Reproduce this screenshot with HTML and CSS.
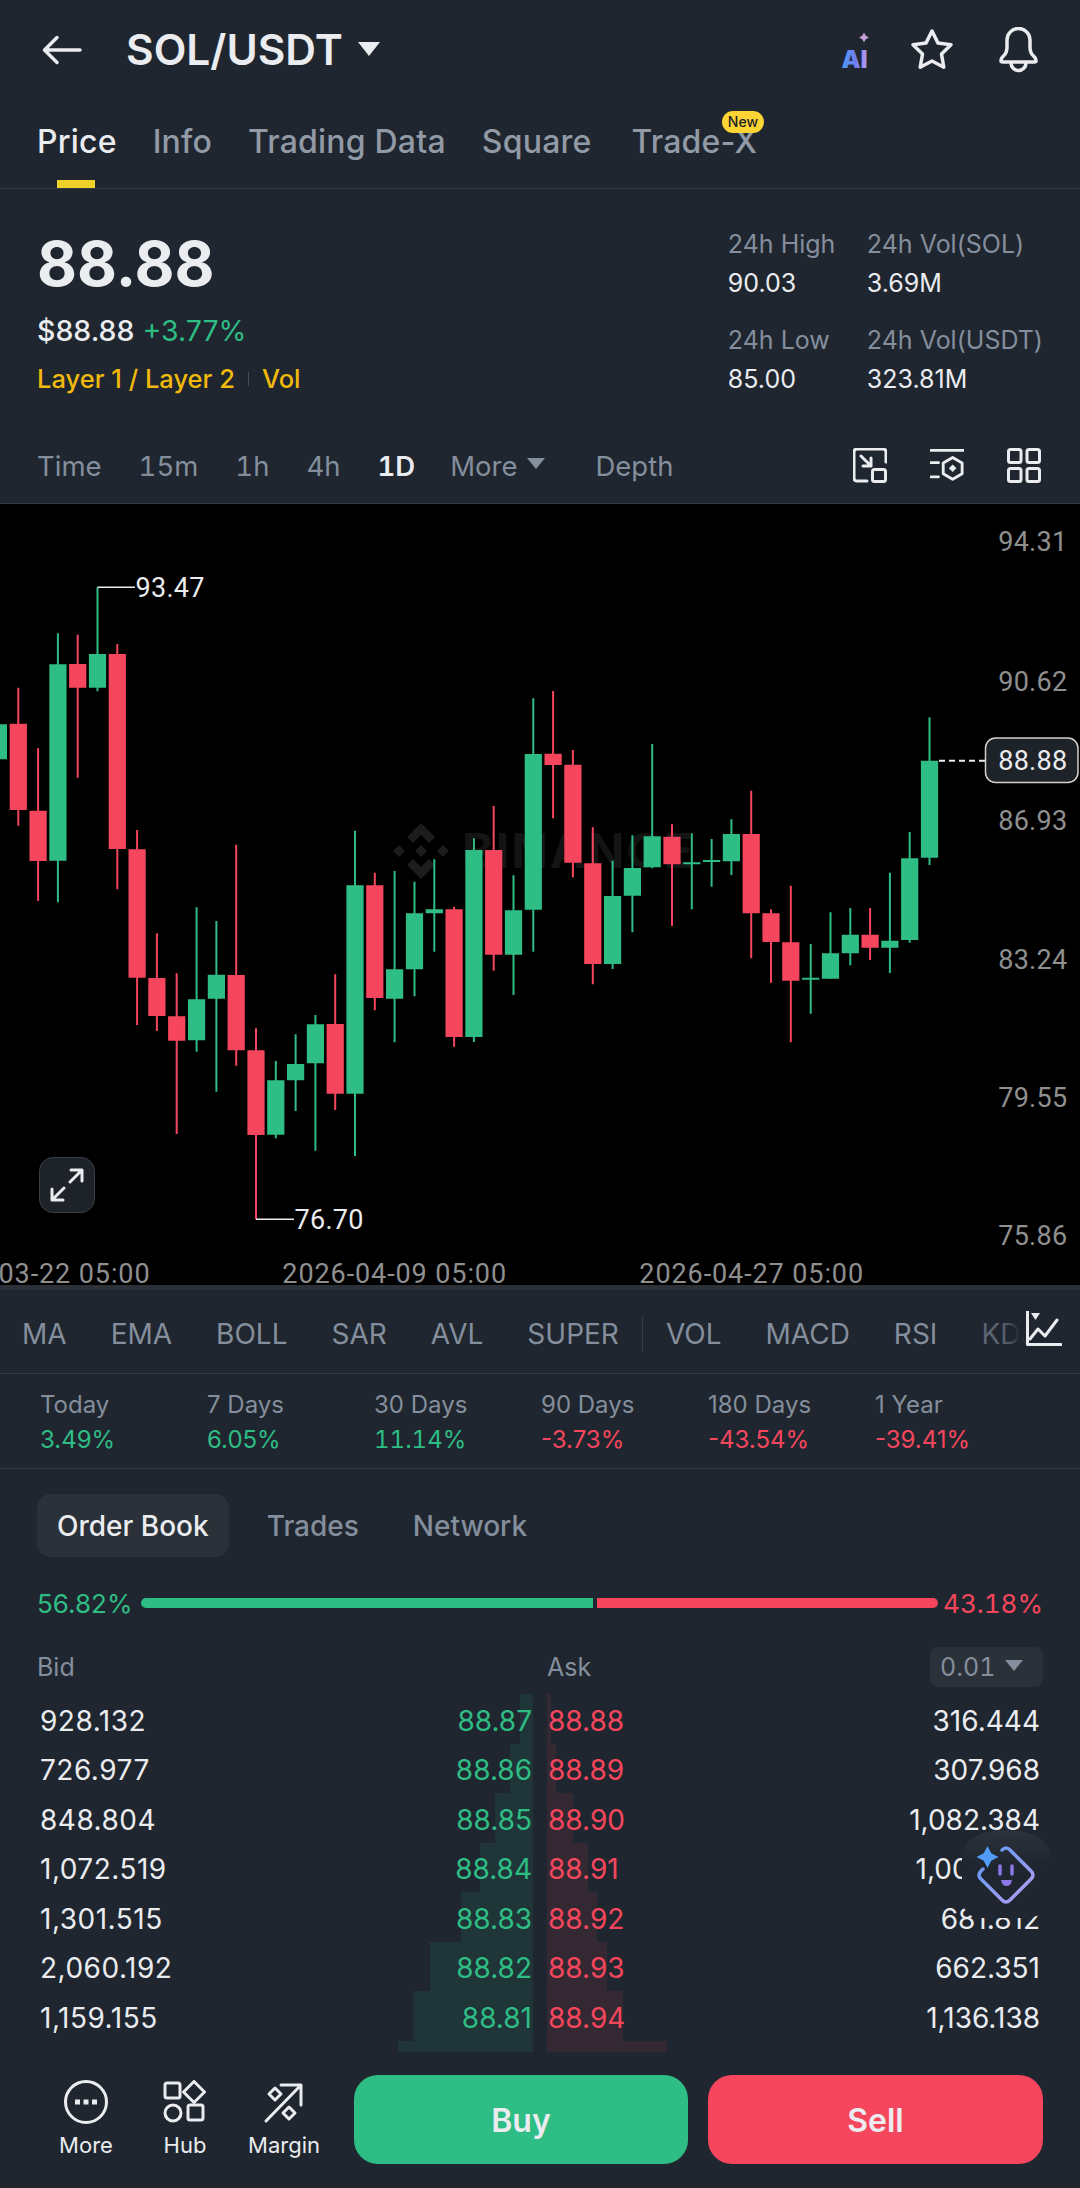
FILE: index.html
```html
<!DOCTYPE html>
<html lang="en">
<head>
<meta charset="utf-8">
<title>SOL/USDT</title>
<link rel="stylesheet" href="styles.css">
</head>
<body>
<div class="page">
  <header class="topbar">
    <svg class="ic-back" viewBox="0 0 40 30"><path d="M38 15H3M15 2.5 2.5 15 15 27.5"/></svg>
    <h1 class="pair">SOL/USDT</h1>
    <span class="caret-title"></span>
    <div class="top-actions">
      <svg class="ic-ai" viewBox="0 0 30 38"><defs><linearGradient id="aig" x1="0" x2="1" y1="0" y2="0"><stop offset="0" stop-color="#4f9bf5"/><stop offset=".55" stop-color="#6f7cf0"/><stop offset="1" stop-color="#b79cf0"/></linearGradient></defs><path class="ai-spark" d="M23 0.5l1.8 3.2 3.2 1.8-3.2 1.8L23 10.5l-1.8-3.2-3.2-1.8 3.2-1.8z"/><text x="0.5" y="35.5" class="ai-text" fill="url(#aig)">AI</text></svg>
      <svg class="ic-star" viewBox="0 0 44 44"><path d="M22 3l5.900 11.900L41 16.800l-9.500 9.300 2.300 13.100L22 33l-11.800 6.200 2.300-13.100L3 16.800l13.100-1.900z"/></svg>
      <svg class="ic-bell" viewBox="0 0 42 46"><path d="M3 34q0-3 2.500-5Q9 26 9 20v-7a11.500 11.500 0 0 1 23 0v7q0 6 3.500 9q2.500 2 2.500 5q0 1-2 1H5q-2 0-2-1zM13 36a7.500 7.500 0 0 0 15 0"/></svg>
    </div>
  </header>

  <nav class="tabs">
    <span class="tab active">Price</span>
    <span class="tab">Info</span>
    <span class="tab">Trading Data</span>
    <span class="tab">Square</span>
    <span class="tab tab-new">Trade-X<em class="badge">New</em></span>
  </nav>

  <section class="summary">
    <div class="sum-left">
      <div class="last">88.88</div>
      <div class="usd"><b>$88.88</b> <span class="pos">+3.77%</span></div>
      <div class="tags"><span>Layer 1 / Layer 2</span><i></i><span>Vol</span></div>
    </div>
    <div class="stats">
      <div class="stat"><span>24h High</span><b>90.03</b></div>
      <div class="stat"><span>24h Vol(SOL)</span><b>3.69M</b></div>
      <div class="stat"><span>24h Low</span><b>85.00</b></div>
      <div class="stat"><span>24h Vol(USDT)</span><b>323.81M</b></div>
    </div>
  </section>

  <div class="intervals">
    <span>Time</span><span>15m</span><span>1h</span><span>4h</span><span class="on">1D</span>
    <span class="more">More<i class="caret"></i></span><span>Depth</span>
    <div class="iv-icons">
      <svg viewBox="0 0 34 35"><path d="M14 33H4q-3 0-3-3V4q0-3 3-3h26q3 0 3 3v10M8 8l10 10M18 10v8h-8"/><rect x="19.500" y="21.500" width="13" height="12" rx="2"/></svg>
      <svg viewBox="0 0 36 36"><path d="M1 2h35M1 15h8M1 30h8"/><path d="M24 9.500l10 5.800v11.400L24 32.500l-10-5.800V15.300z"/><path class="fill" d="M24 17l4 4-4 4-4-4z"/></svg>
      <svg viewBox="0 0 34 35"><rect x="1.500" y="1.500" width="12.500" height="13" rx="2"/><rect x="20" y="1.500" width="12.500" height="13" rx="2"/><rect x="1.500" y="20.500" width="12.500" height="13" rx="2"/><rect x="20" y="20.500" width="12.500" height="13" rx="2"/></svg>
    </div>
  </div>

  <section class="chart">
    <svg class="plot" viewBox="0 504 1080 781">
      <g class="wm"><path d="M421 823l14 14-6 6-8-8-8 8-6-6zM393 851l6-6 6 6-6 6zM437 851l6-6 6 6-6 6zM421 845l6 6-6 6-6-6zM421 879l-14-14 6-6 8 8 8-8 6 6z"/><text x="462" y="868" class="wm-text">BINANCE</text></g>
      <path class="wick up" d="M-1.600 700V787M57.900 633.300V902.300M97.500 587.300V691.300M196.600 907.300V1051.700M216.400 921V1091.700M275.800 1061V1138.300M295.600 1034.300V1111M315.400 1015V1150.700M355 830.700V1156M394.600 871V1042.300M414.500 881.700V996.300M434.300 859.300V951.700M473.900 838.300V1042M513.500 875.300V995M533.300 698.300V951.700M612.600 860.700V969M632.400 835.300V932.300M652.200 744V868.300M691.800 833.300V909.300M711.600 839V886.700M731.400 819.300V875M810.700 944V1013.700M830.500 912.300V978.700M850.300 908V965.300M889.900 872.700V973M909.700 832V942.700M929.500 717.300V865"/>
      <path class="wick dn" d="M18.300 687.700V825.700M38.100 748.300V901M77.700 634.700V777.700M117.300 644V889.300M137.100 830V1025M156.900 933.300V1031M176.700 973.300V1134M236.200 844.700V1065.700M256 1028.300V1219.300M335.200 974.300V1110M374.800 872.700V1010.300M454.100 906.700V1046.700M493.700 806V970.700M553.100 691V818.300M572.900 750V877.300M592.800 827.300V984.300M672 824.300V926M751.200 790.700V958.300M771 909.300V982.700M790.800 885.700V1042.300M870.100 908V960"/>
      <path class="body up" d="M-10.200 724.300h17.200V759.300h-17.200zM49.300 664.300h17.200V860.700h-17.200zM88.900 654h17.200V687.700h-17.200zM188 999.300h17.200V1040.300h-17.200zM207.800 974.700h17.200V998.700h-17.200zM267.200 1080.300h17.200V1134.700h-17.200zM287 1064h17.200V1080.300h-17.200zM306.800 1024.300h17.200V1063.300h-17.200zM346.400 885.300h17.200V1093.700h-17.200zM386 969.300h17.200V998.700h-17.200zM405.900 913.300h17.200V969.300h-17.200zM425.700 909.300h17.200V913.300h-17.200zM465.300 850h17.200V1037h-17.200zM504.900 910.300h17.200V954.700h-17.200zM524.700 754h17.200V909.700h-17.200zM604 896h17.200V964h-17.200zM623.800 868h17.200V895.700h-17.200zM643.600 836.300h17.200V867.300h-17.200zM683.200 862.300h17.200V864.300h-17.200zM703 860h17.200V862h-17.200zM722.800 834h17.200V861.300h-17.200zM802.100 977.700h17.200V979.700h-17.200zM821.900 953.300h17.200V978.700h-17.200zM841.700 934.700h17.200V953.300h-17.200zM881.300 940.700h17.200V947.700h-17.200zM901.100 858.300h17.200V940h-17.200zM920.900 760.700h17.200V857.700h-17.200z"/>
      <path class="body dn" d="M9.700 723.700h17.200V810h-17.200zM29.500 810.700h17.200V861h-17.200zM69.100 664h17.200V687.700h-17.200zM108.700 654h17.200V849h-17.200zM128.500 849.300h17.200V977.700h-17.200zM148.300 978h17.200V1016h-17.200zM168.100 1016.300h17.200V1040.700h-17.200zM227.600 975h17.200V1050.300h-17.200zM247.400 1050.300h17.200V1135h-17.200zM326.600 1024h17.200V1093.700h-17.200zM366.200 885.300h17.200V998h-17.200zM445.500 909.300h17.200V1037h-17.200zM485.100 850h17.200V954.700h-17.200zM544.500 753.700h17.200V765h-17.200zM564.300 764.700h17.200V862.700h-17.200zM584.200 863.300h17.200V964h-17.200zM663.400 836.700h17.200V864.300h-17.200zM742.600 834h17.200V913.300h-17.200zM762.400 913.300h17.200V942h-17.200zM782.200 942.300h17.200V980.700h-17.200zM861.500 934.700h17.200V947.700h-17.200z"/>
      <path class="leader" d="M97.500 587.300H135M256 1219.300H294"/>
      <path class="dash" d="M939 760.700H985"/>
      <text x="135.500" y="597" class="hl">93.47</text>
      <text x="294.500" y="1229" class="hl">76.70</text>
      <text x="1067.500" y="551" class="ax">94.31</text>
      <text x="1067.500" y="690.500" class="ax">90.62</text>
      <text x="1067.500" y="829.500" class="ax">86.93</text>
      <text x="1067.500" y="968.500" class="ax">83.24</text>
      <text x="1067.500" y="1107" class="ax">79.55</text>
      <text x="1067.500" y="1245" class="ax">75.86</text>
      <rect x="985.500" y="738" width="92.500" height="44.500" rx="10" class="lastbox"/>
      <text x="1067.500" y="770" class="ax lastv">88.88</text>
      <text x="150.500" y="1283" class="dt">03-22 05:00</text>
      <text x="507" y="1283" class="dt">2026-04-09 05:00</text>
      <text x="864" y="1283" class="dt">2026-04-27 05:00</text>
    </svg>
    <div class="expand"><svg viewBox="0 0 36 36"><path d="M21 15 33 3M22 3h11v11M15 21 3 33M14 33H3V22"/></svg></div>
  </section>

  <div class="indicators">
    <span>MA</span><span>EMA</span><span>BOLL</span><span>SAR</span><span>AVL</span><span>SUPER</span><i class="sep"></i><span>VOL</span><span>MACD</span><span>RSI</span><span class="fade">KDJ</span>
    <svg class="ic-ind" viewBox="0 0 36 36"><path d="M1.500 0V33.500H35M4 28l8-10 7 7 12-16"/><path class="fill" d="M5 2h9l-4.500 7z"/></svg>
  </div>

  <div class="perf">
    <div class="pf"><span>Today</span><b class="pos">3.49%</b></div>
    <div class="pf"><span>7 Days</span><b class="pos">6.05%</b></div>
    <div class="pf"><span>30 Days</span><b class="pos tnum">11.14%</b></div>
    <div class="pf"><span>90 Days</span><b class="neg">-3.73%</b></div>
    <div class="pf"><span>180 Days</span><b class="neg">-43.54%</b></div>
    <div class="pf"><span>1 Year</span><b class="neg">-39.41%</b></div>
  </div>

  <section class="book">
    <div class="book-tabs"><span class="bt on">Order Book</span><span class="bt">Trades</span><span class="bt">Network</span></div>
    <div class="ratio">
      <span class="pos r-left">56.82%</span>
      <div class="ratio-bar"><i class="rb-g"></i><i class="rb-r"></i></div>
      <span class="neg r-right tnum">43.18%</span>
    </div>
    <div class="book-head"><span class="bh-bid">Bid</span><span class="bh-ask">Ask</span><span class="tick tnum">0.01<i class="caret"></i></span></div>
    <div class="rows">
      <div class="depth">
        <i class="dg" style="width:13px"></i><i class="dg" style="width:23px"></i><i class="dg" style="width:38px"></i><i class="dg" style="width:53px"></i><i class="dg" style="width:72px"></i><i class="dg" style="width:103px"></i><i class="dg" style="width:120px"></i><i class="dg dl" style="width:135px"></i>
      </div>
      <div class="depth ask">
        <i class="dr" style="width:4px"></i><i class="dr" style="width:9px"></i><i class="dr" style="width:26px"></i><i class="dr" style="width:41px"></i><i class="dr" style="width:50px"></i><i class="dr" style="width:60px"></i><i class="dr" style="width:76px"></i><i class="dr dl" style="width:120px"></i>
      </div>
      <div class="row"><span class="q">928.132</span><span class="pb">88.87</span><span class="pa">88.88</span><span class="q qr">316.444</span></div>
      <div class="row"><span class="q">726.977</span><span class="pb">88.86</span><span class="pa">88.89</span><span class="q qr">307.968</span></div>
      <div class="row"><span class="q">848.804</span><span class="pb">88.85</span><span class="pa">88.90</span><span class="q qr">1,082.384</span></div>
      <div class="row"><span class="q">1,072.519</span><span class="pb">88.84</span><span class="pa">88.91</span><span class="q qr">1,008.541</span></div>
      <div class="row"><span class="q">1,301.515</span><span class="pb">88.83</span><span class="pa">88.92</span><span class="q qr">681.812</span></div>
      <div class="row"><span class="q">2,060.192</span><span class="pb">88.82</span><span class="pa">88.93</span><span class="q qr">662.351</span></div>
      <div class="row"><span class="q">1,159.155</span><span class="pb">88.81</span><span class="pa">88.94</span><span class="q qr">1,136.138</span></div>
    </div>
    <div class="robot">
      <svg viewBox="0 0 88 100"><defs><linearGradient id="rbg" x1="0" x2="1" y1="0" y2="1"><stop offset="0" stop-color="#5a9bf6"/><stop offset="1" stop-color="#b79cf0"/></linearGradient><linearGradient id="blob" x1="0" x2="0" y1="0" y2="1"><stop offset="0" stop-color="#2b323c"/><stop offset=".4" stop-color="#1f262f"/></linearGradient></defs>
        <path class="rb-blob" d="M0 28C0 8 22 0 44 0s44 8 44 28V66Q88 88 60 88H20Q0 88 0 66z"/>
        <path class="rb-line" d="M40 20Q44 16 48 20L69 41Q73 45 69 49L48 70Q44 74 40 70L19 49Q15 45 19 41L21 39"/>
        <path class="rb-spark" d="M25.500 16l3.800 7.200 7.200 3.800-7.200 3.800-3.800 7.200-3.800-7.200-7.200-3.800 7.200-3.800z"/>
        <path class="rb-face" d="M38 36v8M50 36v8"/>
        <path class="rb-mouth" d="M39 50h11q-1 6-5.500 6T39 50z"/>
      </svg>
    </div>
  </section>

  <footer class="actionbar">
    <div class="act"><svg viewBox="0 0 44 44"><circle cx="22" cy="22" r="20.500"/><path class="fill" d="M11 19.500h5v5h-5zM19.500 19.500h5v5h-5zM28 19.500h5v5h-5z"/></svg><span>More</span></div>
    <div class="act"><svg viewBox="0 0 44 44"><rect x="2" y="3" width="15" height="15" rx="2"/><path d="M31 1.500 41.500 12 31 22.500 20.500 12z"/><circle cx="10" cy="33" r="8"/><rect x="25" y="25" width="15" height="15" rx="2"/></svg><span>Hub</span></div>
    <div class="act"><svg viewBox="0 0 44 44"><path d="M4 41 39 5M19 5h20v20"/><path d="M13 8l6 6-6 6-6-6zM27 27l6 6-6 6-6-6z"/></svg><span>Margin</span></div>
    <div class="trade buy">Buy</div>
    <div class="trade sell">Sell</div>
  </footer>
</div>
</body>
</html>
```

FILE: styles.css
```css
* { box-sizing: border-box; }
html, body { margin: 0; padding: 0; background: #1f262f; }
body { font-family: "Inter", "Liberation Sans", sans-serif; color: #eaecef; }
.page { position: relative; width: 1080px; height: 2188px; overflow: hidden; display: flex; flex-direction: column; }
svg { display: block; }
svg path, svg rect, svg circle { fill: none; stroke: #eaecef; stroke-width: 3; stroke-linecap: round; stroke-linejoin: round; }
svg path.fill { fill: #eaecef; stroke: none; }
.pos { color: #2ebd85; }
.neg { color: #f6465d; }
.tnum { font-variant-numeric: tabular-nums; }

/* top bar */
.topbar { height: 100px; padding: 0 40px 0 42px; display: flex; align-items: center; flex: none; }
.ic-back { width: 40px; height: 30px; }
.ic-back path { stroke-width: 3.5; }
.pair { margin: 0 0 0 44px; font-size: 42.500px; font-weight: 600; line-height: 1; color: #eaecef; }
.caret-title { margin-left: 15px; margin-top: -2px; border: 11px solid transparent; border-top: 14px solid #eaecef; border-bottom: 0; }
.top-actions { margin-left: auto; display: flex; align-items: center; }
.ic-ai { width: 30px; height: 38px; margin-top: 2px; }
svg path.ai-spark { fill: #c9a0d8; stroke: none; }
.ai-text { font-family: "Inter", sans-serif; font-size: 24px; font-weight: 900; }
.ic-star { width: 44px; height: 44px; margin-left: 39px; }
.ic-star path, .ic-bell path { stroke-width: 3.5; }
.ic-bell { width: 42px; height: 46px; margin-left: 44px; }

/* tabs */
.tabs { height: 89px; padding: 0 37px 5px; display: flex; gap: 36px; align-items: center; border-bottom: 1px solid #333b47; flex: none; }
.tab { position: relative; font-size: 32px; font-weight: 500; color: #929aa5; line-height: 1; letter-spacing: .2px; }
.tab.active { color: #eaecef; }
.tab.active::after { content: ""; position: absolute; left: 20px; width: 38px; height: 8px; bottom: -30px; background: #f0d029; }
.tab-new { margin-left: 4px; }
.badge { position: absolute; right: -7px; top: -15px; padding: 2px 6px; height: 22px; border-radius: 11px; background: #fcd535; color: #1e2329; font-size: 14px; font-style: normal; font-weight: 500; line-height: 18px; letter-spacing: 0; }

/* summary */
.summary { height: 241px; padding: 0 37px 0 37px; display: flex; justify-content: space-between; flex: none; }
.sum-left { padding-top: 41px; }
.last { font-size: 61.500px; font-weight: 700; line-height: 68px; color: #eaecef; }
.usd { margin-top: 16px; font-size: 28.500px; line-height: 34px; }
.usd b { font-weight: 500; color: #eaecef; }
.tags { margin-top: 15px; display: flex; align-items: center; font-size: 25.500px; font-weight: 500; line-height: 32px; color: #f0b90b; }
.tags i { width: 1px; height: 14px; background: #474d57; margin: 0 13px; }
.stats { padding-top: 39px; display: grid; grid-template-columns: 139px auto; grid-auto-rows: 96px; }
.stat { display: flex; flex-direction: column; gap: 7px; }
.stat span { font-size: 25px; line-height: 32px; color: #848e9c; }
.stat b { font-size: 25px; font-weight: 400; line-height: 32px; color: #eaecef; }

/* intervals */
.intervals { height: 74px; padding: 0 37px 2px; display: flex; align-items: center; gap: 37px; font-size: 27.500px; color: #848e9c; border-bottom: 1px solid #333b47; flex: none; font-variant-numeric: tabular-nums; }
.intervals .on { color: #eaecef; font-weight: 600; }
.more { display: flex; align-items: center; gap: 10px; margin: 0 13px 0 -2px; }
.caret { display: inline-block; border: 9px solid transparent; border-top: 11px solid #848e9c; border-bottom: 0; margin-top: -4px; }
.iv-icons { margin-left: auto; display: flex; gap: 43px; margin-right: 2px; }
.iv-icons svg { width: 34px; height: 35px; }

/* chart */
.chart { position: relative; height: 781px; background: #000; flex: none; }
.plot { width: 1080px; height: 781px; }
.plot path.up { stroke: #2ebd85; }
.plot path.dn { stroke: #f6465d; }
.plot path.wick { stroke-width: 2; stroke-linecap: butt; }
.plot path.body { stroke: none; }
.plot path.body.up { fill: #2ebd85; }
.plot path.body.dn { fill: #f6465d; }
.plot path.leader { stroke: #eaecef; stroke-width: 1.500; stroke-linecap: butt; }
.plot path.dash { stroke: #eaecef; stroke-width: 2; stroke-dasharray: 6 4; stroke-linecap: butt; }
.plot .wm path { fill: #1c1c1c; stroke: none; }
.plot text { font-family: "Roboto", sans-serif; letter-spacing: .3px; }
.plot text.wm-text { font-family: "Inter", sans-serif; font-size: 48px; font-weight: 700; fill: #141414; letter-spacing: 2px; }
.hl { font-size: 27px; fill: #eaecef; }
.ax { font-size: 27px; fill: #8f8f8f; text-anchor: end; }
.plot text.lastv { fill: #eaecef; }
.plot text.dt { font-size: 27px; fill: #8f8f8f; text-anchor: end; letter-spacing: .9px; }
.plot rect.lastbox { fill: #1e2329; stroke: #d0d0d0; stroke-width: 1.500; }
.expand { position: absolute; left: 39px; top: 653px; width: 56px; height: 56px; border-radius: 14px; background: #1e2329; border: 1.500px solid #3a3f47; display: flex; align-items: center; justify-content: center; }
.expand svg { width: 36px; height: 36px; }

/* indicators */
.indicators { position: relative; height: 89px; padding: 5px 22px 0; display: flex; align-items: center; gap: 44px; font-size: 28px; color: #848e9c; border-top: 5px solid #2b3139; border-bottom: 1px solid #333b47; flex: none; overflow: hidden; white-space: nowrap; }
.sep { width: 1px; height: 36px; background: #333b47; margin: 0 -21px; }
.fade { opacity: .6; }
.ic-ind { position: absolute; right: 18px; top: 21px; width: 36px; height: 36px; box-shadow: -14px 0 12px #1f262f; background: #1f262f; }

/* performance */
.perf { height: 95px; padding: 16px 30px 0 40px; display: grid; grid-template-columns: repeat(6, 167px); border-bottom: 1px solid #333b47; flex: none; }
.pf { display: flex; flex-direction: column; gap: 5px; font-size: 24px; line-height: 30px; }
.pf span { color: #848e9c; }
.pf b { font-weight: 400; }

/* book */
.book { position: relative; flex: 1; }
.book-tabs { padding: 25px 37px 0; display: flex; align-items: center; gap: 0; }
.bt { height: 63px; display: flex; align-items: center; padding: 0 20px; font-size: 28px; font-weight: 500; color: #848e9c; }
.bt + .bt { padding: 0 27px; }
.bt.on { background: #2b3139; color: #eaecef; border-radius: 14px; margin-right: 11px; }
.ratio { margin-top: 25px; padding: 0 37px; height: 42px; display: flex; align-items: center; font-size: 26px; }
.r-left { flex: 0 0 104px; }
.r-right { margin-left: auto; }
.ratio-bar { display: flex; width: 797px; height: 10px; gap: 4px; }
.rb-g { flex: 0 0 452px; background: #2ebd85; border-radius: 5px 0 0 5px; }
.rb-r { flex: 1; background: #f6465d; border-radius: 0 5px 5px 0; }
.book-head { position: relative; height: 42px; margin-top: 22px; padding: 0 37px; display: flex; align-items: center; font-size: 25px; color: #848e9c; }
.bh-ask { position: absolute; left: 547px; }
.tick { margin-left: auto; width: 113px; height: 40px; padding-left: 10px; border-radius: 8px; background: #2b3139; display: flex; align-items: center; gap: 10px; }
.rows { position: relative; margin-top: 8px; height: 356px; }
.depth { position: absolute; top: -2px; right: 547px; display: flex; flex-direction: column; align-items: flex-end; }
.depth.ask { right: auto; left: 547px; align-items: flex-start; }
.depth i { display: block; height: 49.500px; }
.depth i.dl { height: 11px; }
.dg { background: rgba(46,189,133,.1); }
.dr { background: rgba(246,70,93,.1); }
.row { position: relative; height: 49.500px; display: flex; align-items: center; font-size: 28px; padding: 0 40px; }
.q { color: #eaecef; width: 200px; letter-spacing: .5px; }
.qr { margin-left: auto; text-align: right; width: 300px; letter-spacing: 0; }
.pb { position: absolute; right: 548px; color: #2ebd85; }
.pa { position: absolute; left: 548px; color: #f6465d; }
.robot { position: absolute; left: 962px; top: 361px; width: 88px; height: 100px; }
.robot svg { width: 88px; height: 100px; }
.robot path.rb-blob { fill: url(#blob); stroke: none; }
.robot path.rb-line { stroke: url(#rbg); stroke-width: 3.500; }
.robot path.rb-spark { fill: #4f9bf5; stroke: none; }
.robot path.rb-face { stroke: #8b78e6; stroke-width: 3.500; }
.robot path.rb-mouth { fill: #8b78e6; stroke: none; }

/* action bar */
.actionbar { position: absolute; top: 2075px; left: 0; width: 1080px; height: 89px; padding: 0 37px 0 48px; display: flex; align-items: center; }
.act { width: 76px; display: flex; flex-direction: column; align-items: center; font-size: 22px; margin-right: 23px; color: #eaecef; }
.act svg { width: 44px; height: 44px; margin-bottom: 6px; margin-top: 1px; }
.act span { line-height: 30px; white-space: nowrap; }
.trade { height: 89px; padding-top: 2px; border-radius: 24px; display: flex; align-items: center; justify-content: center; font-size: 32px; font-weight: 600; color: #eaecef; }
.buy { width: 334px; background: #2ebd85; margin-left: 9px; }
.sell { width: 335px; background: #f6465d; margin-left: 20px; }
```
